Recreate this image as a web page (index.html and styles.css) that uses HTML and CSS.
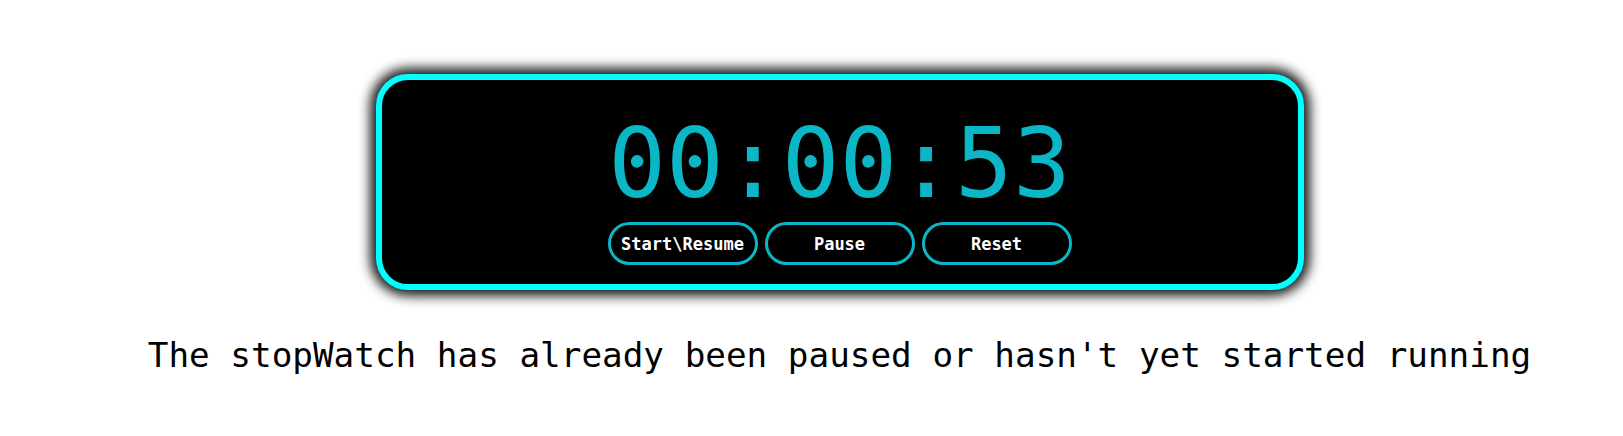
FILE: index.html
```html
<!DOCTYPE html>
<html>
<head>
<meta charset="utf-8">
<link rel="stylesheet" href="styles.css">
</head>
<body>
<div class="page">
  <div class="watch">
    <div class="time">00:00:53</div>
    <div class="controls">
      <button class="btn">Start\Resume</button>
      <button class="btn">Pause</button>
      <button class="btn">Reset</button>
    </div>
  </div>
  <p class="status">The stopWatch has already been paused or hasn't yet started running</p>
</div>
</body>
</html>
```
FILE: styles.css
```css
html, body {
  margin: 0;
  padding: 0;
  background: #ffffff;
}
body {
  margin: 8px;
  font-family: "DejaVu Sans Mono", "Liberation Mono", monospace;
}
.page {
  display: flex;
  flex-direction: column;
  align-items: center;
  padding-left: 56px;
  padding-top: 66px;
}
.watch {
  box-sizing: border-box;
  width: 928px;
  height: 216px;
  background: #000;
  border: 6px solid #00ffff;
  border-radius: 32px;
  box-shadow: 0 0 12px 6px rgba(0, 0, 0, 0.9);
  display: flex;
  flex-direction: column;
  align-items: center;
  padding-top: 36px;
}
.time {
  font-size: 96px;
  line-height: 96px;
  color: #0bb6c6;
  letter-spacing: 0;
}
.controls {
  display: flex;
  gap: 7px;
  margin-top: 10px;
}
.btn {
  box-sizing: border-box;
  width: 150px;
  height: 43px;
  background: #000;
  color: #fff;
  border: 3px solid #0bb6c6;
  border-radius: 22px;
  font-family: "DejaVu Sans Mono", "Liberation Mono", monospace;
  font-size: 17px;
  font-weight: bold;
  padding: 0;
  display: flex;
  align-items: center;
  justify-content: center;
}
.status {
  margin: 45px 0 0 0;
  font-size: 34.3px;
  line-height: 40px;
  color: #000;
  white-space: nowrap;
}
```
